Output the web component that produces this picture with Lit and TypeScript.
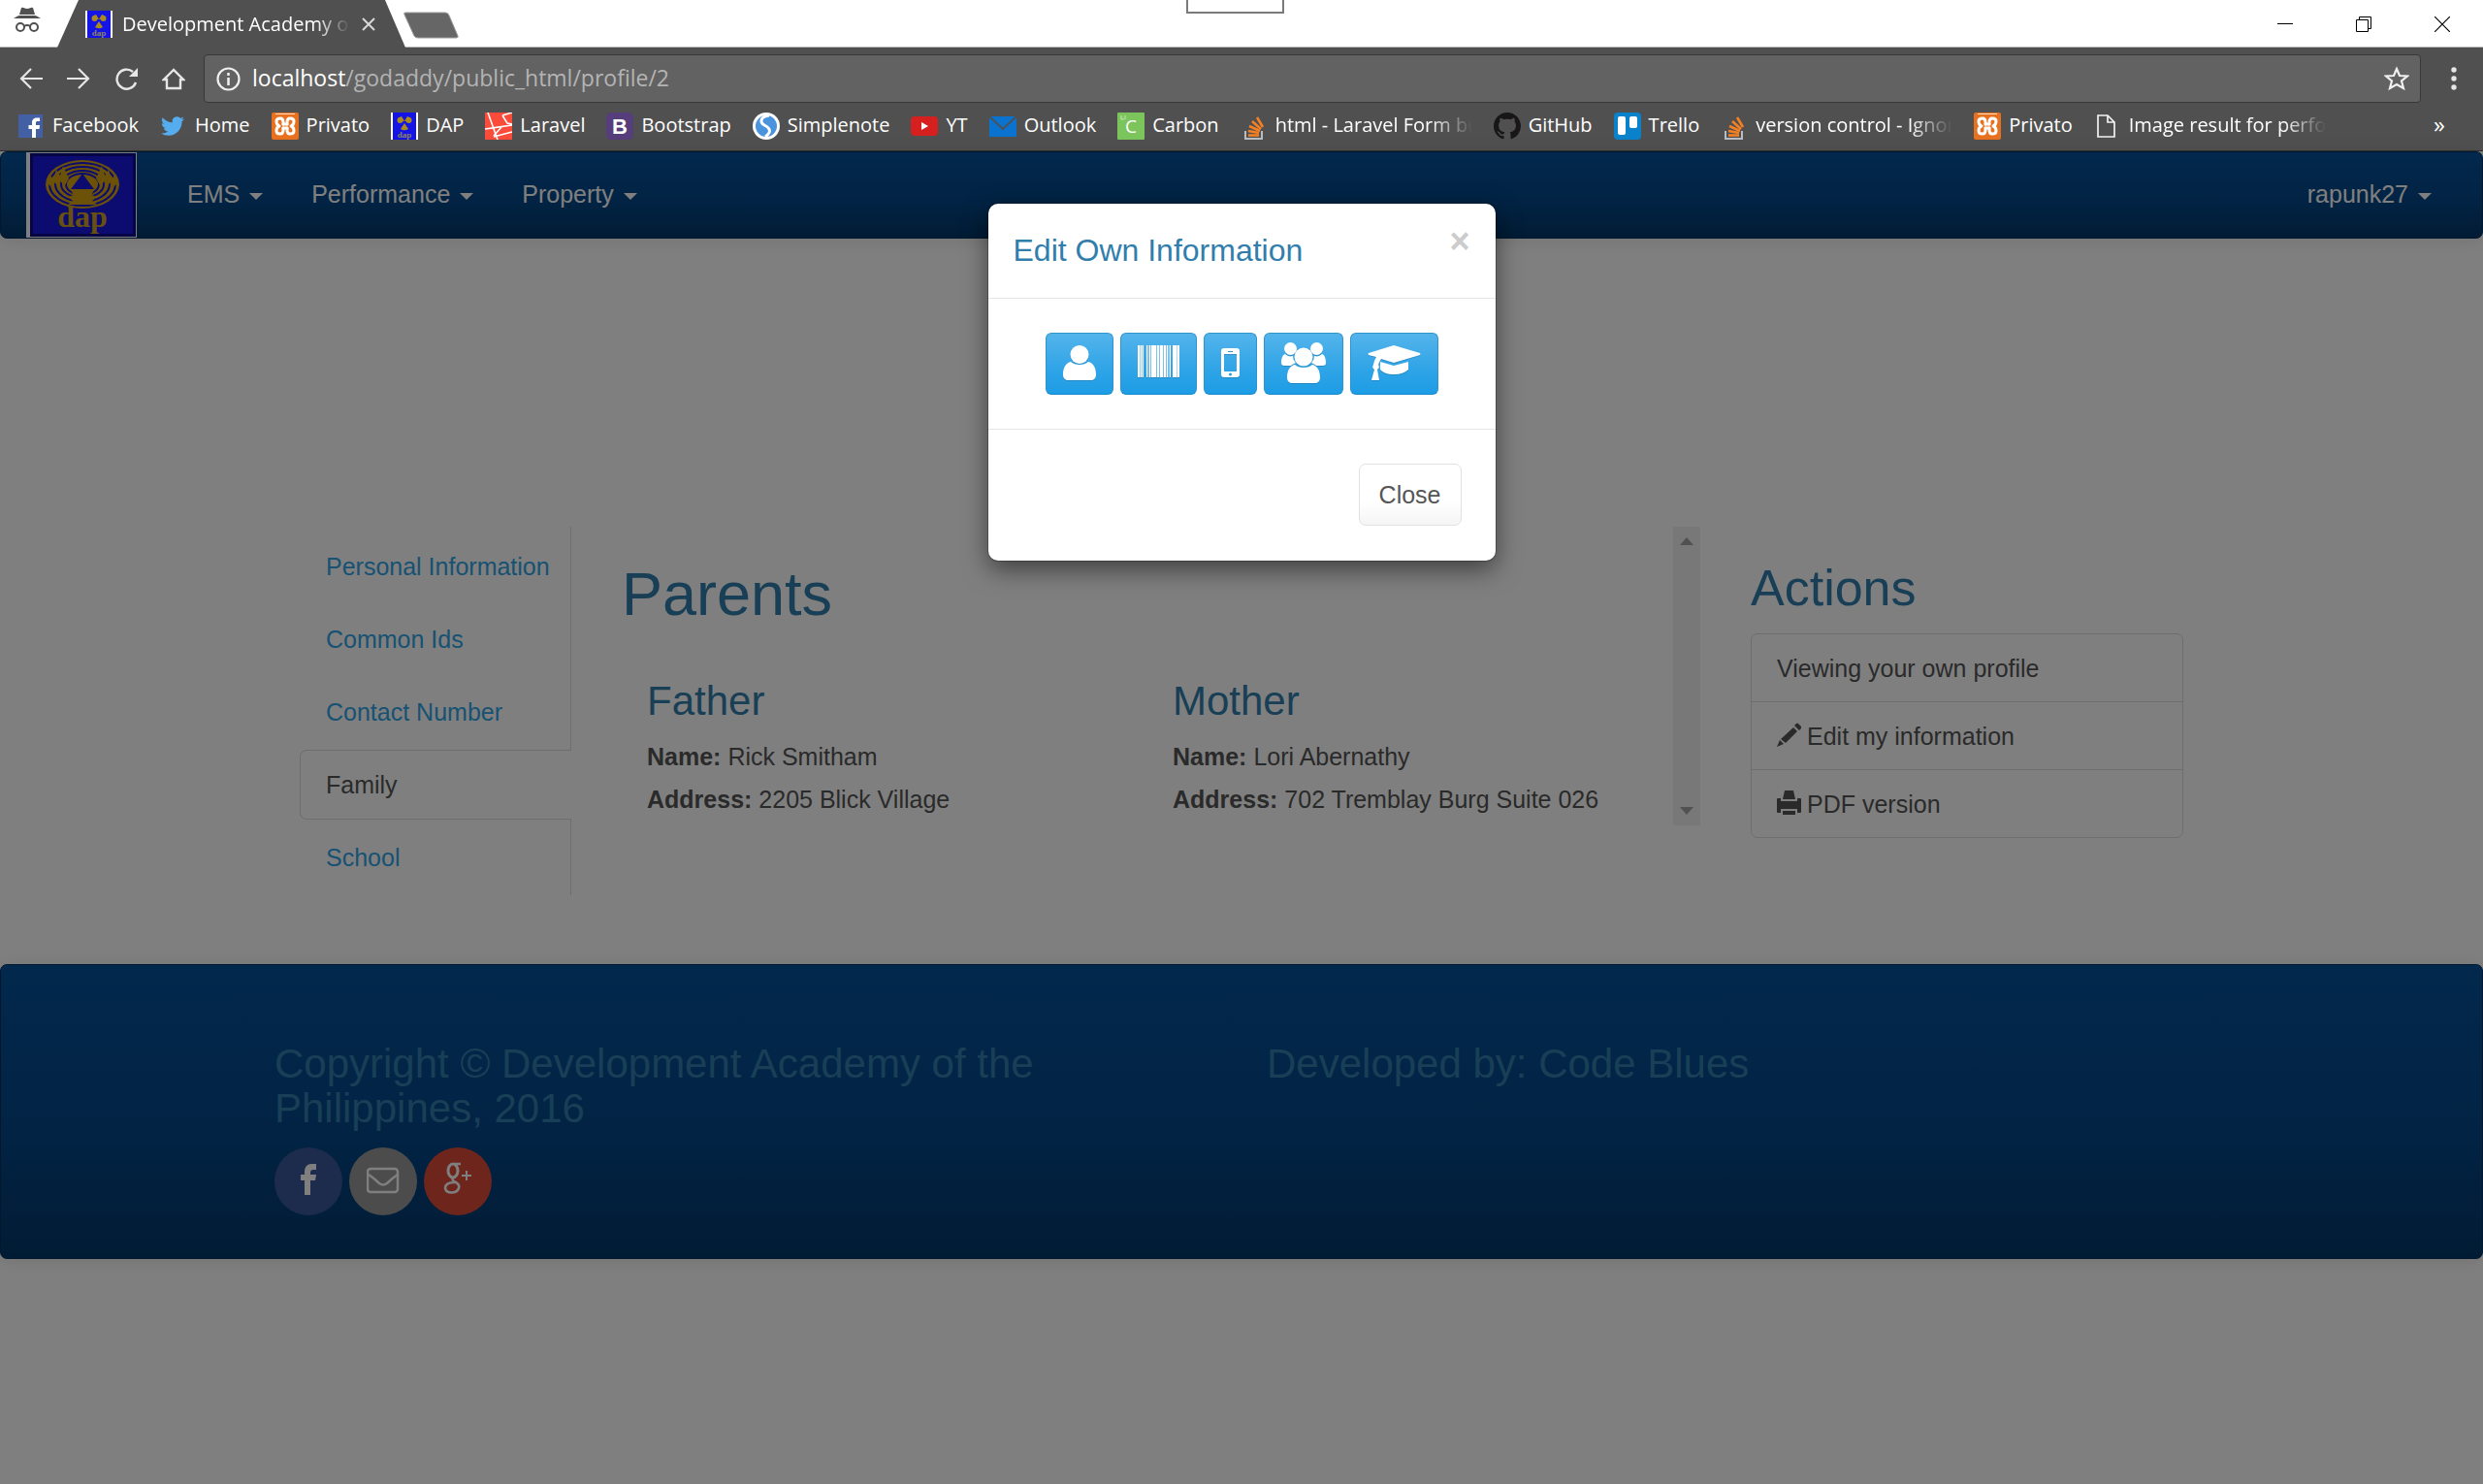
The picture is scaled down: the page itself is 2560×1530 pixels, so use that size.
import { LitElement, html, svg, css } from "lit";
import { customElement } from "lit/decorators.js";
import { classMap } from "lit/directives/class-map.js";

const glyph = (w: number, h: number, body: unknown, cls = "") =>
  html`<svg class=${cls} width=${w} height=${h} viewBox="0 0 ${w} ${h}" aria-hidden="true">${body}</svg>`;

const dapMark = svg`
  <rect width="28" height="28" fill="#fff"/><rect x="2" width="24" height="28" fill="#1414e6"/>
  <g fill="#a98a1c"><path d="M14 9 L11 4 A6 5 0 0 0 7 9 Z"/><path d="M14 9 L17 4 A6 5 0 0 1 21 9 Z"/>
  <circle cx="9.500" cy="8" r="3"/><circle cx="18.500" cy="8" r="3"/><path d="M14 11 L18 17 A7 6 0 0 1 10 17 Z"/></g>
  <text x="14" y="26" font-family="Liberation Serif, serif" font-size="9" font-weight="700" fill="#8d8460" text-anchor="middle">dap</text>`;

const xampp = svg`
  <rect width="28" height="28" rx="2" fill="#e8711f"/><rect x="4" y="1" width="20" height="1" fill="#ffd9bd"/>
  <g fill="none" stroke="#fff" stroke-width="3" stroke-linejoin="round" stroke-linecap="round">
  <path d="M12 12 V10 Q12 6 9 6 Q5 6 5 9 Q5 13 8 14 Q5 15 5 19 Q5 22 9 22 Q12 22 12 18 V16"/>
  <path d="M16 12 V10 Q16 6 19 6 Q23 6 23 9 Q23 13 20 14 Q23 15 23 19 Q23 22 19 22 Q16 22 16 18 V16"/>
  <path d="M12 12 H16 M12 16 H16"/></g>`;

const stack = svg`
  <path d="M5 19 v8 h17 v-8" fill="none" stroke="#b9bcc0" stroke-width="2"/>
  <g stroke="#f48024" stroke-width="2.600"><path d="M8 23.500 h11"/><path d="M8 19 l11 2"/><path d="M9 14 l11 5"/><path d="M12 9 l9 8"/><path d="M17 5 l6 10"/></g>`;

const marks: Record<string, unknown> = {
  facebook: svg`<rect x="1" y="2" width="25" height="24" fill="#4460a4"/>
    <path d="M15 26 V17 H11.500 V13 H15 V10.500 C15 7 17 5.500 20 5.500 H23 V9 H21 C19.500 9 19 9.500 19 11 V13 H23 L22.500 17 H19 V26Z" fill="#fff"/>`,
  twitter: svg`<path transform="translate(1 2)" fill="#55acee" d="M23.953 4.57a10 10 0 01-2.825.775 4.958 4.958 0 002.163-2.723c-.951.555-2.005.959-3.127 1.184a4.92 4.92 0 00-8.384 4.482C7.69 8.095 4.067 6.13 1.64 3.162a4.822 4.822 0 00-.666 2.475c0 1.71.87 3.213 2.188 4.096a4.904 4.904 0 01-2.228-.616v.06a4.923 4.923 0 003.946 4.827 4.996 4.996 0 01-2.212.085 4.936 4.936 0 004.604 3.417 9.867 9.867 0 01-6.102 2.105c-.39 0-.779-.023-1.17-.067a13.995 13.995 0 007.557 2.209c9.053 0 13.998-7.496 13.998-13.985 0-.21 0-.42-.015-.63A9.935 9.935 0 0024 4.59z"/>`,
  xampp,
  dap: dapMark,
  laravel: svg`<rect width="28" height="28" fill="#fb4b3a"/>
    <path d="M3 0 L13 28 M0 17 L28 13 M9 24 L18 14 M18 3 L28 0 M18 3 L23 11 L28 12 M9 25 L28 20" fill="none" stroke="#fff" stroke-width="1.600"/>`,
  bootstrap: svg`<rect width="28" height="28" rx="5" fill="#563d7c"/>
    <text x="14" y="22" font-family="Liberation Sans, sans-serif" font-size="22" font-weight="700" fill="#fff" text-anchor="middle">B</text>`,
  simplenote: svg`<circle cx="14" cy="14" r="14" fill="#fff"/><circle cx="14" cy="14" r="11" fill="#4a93dd"/>
    <path d="M17 3 C8 4 7 10 12 13 C18 16 20 20 13 25" fill="none" stroke="#fff" stroke-width="3"/>`,
  youtube: svg`<rect y="4" width="28" height="20" rx="4" fill="#d5201f"/><path d="M11 10 L18 14 L11 18Z" fill="#fff"/>`,
  outlook: svg`<path d="M0 4 H28 V25 H0Z" fill="#0a72cf"/><path d="M0 4 L14 17 L28 4" fill="none" stroke="#505050" stroke-width="2"/>`,
  carbon: svg`<rect width="28" height="28" rx="1" fill="#7cc45c"/><path d="M4 3 v4 h3 M8 3 v4" stroke="#c9e8b8" stroke-width="1" fill="none"/>
    <text x="14" y="21" font-family="Open Sans, sans-serif" font-size="19" fill="#fff" text-anchor="middle">C</text>`,
  stack,
  github: svg`<path transform="scale(1.750)" fill="#181616" d="M8 0C3.58 0 0 3.58 0 8c0 3.54 2.29 6.53 5.47 7.59.4.07.55-.17.55-.38 0-.19-.01-.82-.01-1.49-2.01.37-2.53-.49-2.69-.94-.09-.23-.48-.94-.82-1.13-.28-.15-.68-.52-.01-.53.63-.01 1.08.58 1.23.82.72 1.21 1.87.87 2.33.66.07-.52.28-.87.51-1.07-1.78-.2-3.64-.89-3.64-3.95 0-.87.31-1.59.82-2.15-.08-.2-.36-1.02.08-2.12 0 0 .67-.21 2.2.82.64-.18 1.32-.27 2-.27s1.36.09 2 .27c1.53-1.04 2.2-.82 2.2-.82.44 1.1.16 1.92.08 2.12.51.56.82 1.27.82 2.15 0 3.07-1.87 3.75-3.65 3.95.29.25.54.73.54 1.48 0 1.07-.01 1.93-.01 2.2 0 .21.15.46.55.38A8.01 8.01 0 0 0 16 8c0-4.42-3.58-8-8-8z"/>`,
  trello: svg`<rect width="28" height="28" rx="4" fill="#0a82cb"/><rect x="4" y="4" width="8" height="19" rx="2" fill="#fff"/><rect x="16" y="4" width="8" height="12" rx="2" fill="#fff"/>`,
  page: svg`<path d="M4 3 H14 L21 10 V25 H4Z M14 3 V10 H21" fill="none" stroke="#f2f2f2" stroke-width="1.700"/>`,
};

const bookmarks = [
  { icon: "facebook", label: "Facebook" },
  { icon: "twitter", label: "Home" },
  { icon: "xampp", label: "Privato" },
  { icon: "dap", label: "DAP" },
  { icon: "laravel", label: "Laravel" },
  { icon: "bootstrap", label: "Bootstrap" },
  { icon: "simplenote", label: "Simplenote" },
  { icon: "youtube", label: "YT" },
  { icon: "outlook", label: "Outlook" },
  { icon: "carbon", label: "Carbon" },
  { icon: "stack", label: "html - Laravel Form bu", long: true },
  { icon: "github", label: "GitHub" },
  { icon: "trello", label: "Trello" },
  { icon: "stack", label: "version control - Ignor", long: true },
  { icon: "xampp", label: "Privato" },
  { icon: "page", label: "Image result for perfo", long: true },
];

@customElement("browser-chrome")
class BrowserChrome extends LitElement {
  static styles = css`
    :host { display: block; background: #505050; color: #fff; font-family: "Open Sans", "Noto Sans", sans-serif; border-bottom: 1px solid #303030; }
    svg { display: block; flex: none; }
    button { border: 0; padding: 0; background: none; color: inherit; font: inherit; }
    a { color: inherit; text-decoration: none; }
    .strip { position: relative; display: flex; align-items: flex-end; height: 49px; background: linear-gradient(#fff 48px, #b9b9b9 48px); }
    .incognito { padding: 0 17px 14px 14px; }
    .tab { display: flex; align-items: center; box-sizing: border-box; width: 359px; height: 49px; padding: 0 31px 0 29px; background: #505050; clip-path: polygon(0 100%, 22px 0, calc(100% - 21px) 0, 100% 100%); }
    .tab-title { flex: 1; margin: 0 12px 0 10px; font-size: 20px; line-height: 28px; white-space: nowrap; overflow: hidden; mask-image: linear-gradient(90deg, #000 85%, transparent); }
    .new-tab { margin-bottom: 9px; margin-left: -3px; }
    .snap { position: absolute; top: -2px; left: calc(50% - 57px); width: 97px; height: 12px; border: 2px solid #7a7a7a; background: #fff; }
    .controls { display: flex; margin: 0 2px 0 auto; align-self: stretch; }
    .control { display: grid; place-items: center; width: 81px; }
    .toolbar { display: flex; align-items: center; padding: 7px 22px 0 7px; }
    .nav-button { display: grid; place-items: center; width: 49px; height: 49px; }
    .omnibox { flex: 1; display: flex; align-items: center; box-sizing: border-box; height: 50px; margin-left: 7px; padding: 0 11px 0 12px; border: 1px solid #383838; border-radius: 4px; background: #626262; }
    .url { flex: 1; margin-left: 12px; padding-bottom: 2px; font-size: 23px; line-height: 32px; color: #b4b4b4; }
    .host { color: #fff; }
    .menu { margin-left: 26px; }
    .bookmarks { display: flex; align-items: center; gap: 22px; height: 47px; padding: 0 39px 2px 18px; }
    .bookmark { display: flex; align-items: center; gap: 8px; font-size: 20px; line-height: 28px; white-space: nowrap; }
    .bookmark span { padding-bottom: 2px; }
    .long { width: 203px; overflow: hidden; mask-image: linear-gradient(90deg, #000 78%, transparent); }
    .more { margin-left: auto; padding-bottom: 4px; font-size: 24px; line-height: 28px; }
  `;

  render() {
    return html`
      <div class="strip">
        ${glyph(28, 28, svg`<path d="M8 1 C10 0 12 2 14 2 C16 2 18 0 20 1 L22 8 H6Z" fill="#505050"/><path d="M0 12 C3 10 5 9 6 9 H22 C23 9 25 10 28 12Z" fill="#505050"/>
          <g fill="none" stroke="#505050" stroke-width="2"><circle cx="7" cy="21" r="4"/><circle cx="21" cy="21" r="4"/><path d="M11 20 q3 -2 6 0"/></g>`, "incognito")}
        <div class="tab">
          ${glyph(28, 28, dapMark)}
          <span class="tab-title">Development Academy of</span>
          <button aria-label="Close tab">${glyph(14, 14, svg`<path d="M1 1 L13 13 M13 1 L1 13" stroke="#d8d8d8" stroke-width="2"/>`)}</button>
        </div>
        <button class="new-tab" aria-label="New tab">${glyph(60, 28, svg`<path d="M3 1 H44 Q47 1 48 4 L57 25 Q58 27 55 27 H16 Q13 27 12 25 L2 3 Q1 1 3 1Z" fill="#666" stroke="#999" stroke-width="1"/>`)}</button>
        <div class="snap"></div>
        <div class="controls">
          <button class="control" aria-label="Minimize">${glyph(16, 16, svg`<path d="M0 7.500 H16" stroke="#000" stroke-width="1"/>`)}</button>
          <button class="control" aria-label="Restore">${glyph(16, 16, svg`<path d="M0.500 3.500 H12.500 V15.500 H0.500Z M3.500 3.500 V0.500 H15.500 V12.500 H12.500" fill="none" stroke="#000" stroke-width="1"/>`)}</button>
          <button class="control" aria-label="Close window">${glyph(16, 16, svg`<path d="M0 0 L16 16 M16 0 L0 16" stroke="#000" stroke-width="1.200"/>`)}</button>
        </div>
      </div>
      <div class="toolbar">
        <button class="nav-button" aria-label="Back">${glyph(24, 24, svg`<path d="M24 12 H2 M12 2 L2 12 L12 22" fill="none" stroke="#e6e6e6" stroke-width="2.200"/>`)}</button>
        <button class="nav-button" aria-label="Forward">${glyph(24, 24, svg`<path d="M0 12 H22 M12 2 L22 12 L12 22" fill="none" stroke="#e6e6e6" stroke-width="2.200"/>`)}</button>
        <button class="nav-button" aria-label="Reload">${glyph(24, 24, svg`<path d="M22 16 A10 10 0 1 1 19 5" fill="none" stroke="#e6e6e6" stroke-width="2.400"/><path d="M24 1 V10 H15Z" fill="#e6e6e6"/>`)}</button>
        <button class="nav-button" aria-label="Home page">${glyph(24, 24, svg`<path d="M12 3 L2 13 H5 V22 H19 V13 H22Z" fill="none" stroke="#e6e6e6" stroke-width="2.400"/>`)}</button>
        <div class="omnibox">
          ${glyph(25, 25, svg`<circle cx="12.500" cy="12.500" r="11" fill="none" stroke="#f0f0f0" stroke-width="2.200"/><path d="M12.500 11 V19 M12.500 6 V9" stroke="#f0f0f0" stroke-width="2.500"/>`)}
          <span class="url"><span class="host">localhost</span>/godaddy/public_html/profile/2</span>
          <button aria-label="Bookmark this page">${glyph(26, 26, svg`<path d="M13 3 L16 10 L24 10.500 L18 15.500 L20 23 L13 19 L6 23 L8 15.500 L2 10.500 L10 10Z" fill="none" stroke="#f0f0f0" stroke-width="2.200"/>`)}</button>
        </div>
        <button class="menu" aria-label="Menu">${glyph(16, 26, svg`<g fill="#e6e6e6"><circle cx="8" cy="4" r="2.700"/><circle cx="8" cy="13" r="2.700"/><circle cx="8" cy="22" r="2.700"/></g>`)}</button>
      </div>
      <nav class="bookmarks" aria-label="Bookmarks">
        ${bookmarks.map(b => html`<a class="bookmark" href="#">${glyph(28, 28, marks[b.icon])}<span class=${classMap({ long: !!b.long })}>${b.label}</span></a>`)}
        <button class="more" aria-label="More bookmarks">»</button>
      </nav>`;
  }
}

const torso = "M8 17 C3 18 0 23 0 30 C0 34 2 36 6 36 H28 C32 36 34 34 34 30 C34 23 31 18 26 17 C24 19 21 20 17 20 C13 20 10 19 8 17Z";
const bars = [[0, 2], [3, 1], [5, 1], [9, 1], [12, 1], [14, 5], [20, 2], [23, 3], [27, 2], [30, 1], [33, 1], [36, 4], [41, 2]];

const editIcons = [
  { label: "Personal information", icon: glyph(34, 44, svg`<g transform="translate(0 3)" fill="#fff"><circle cx="17" cy="9.500" r="9.500"/><path d=${torso}/></g>`) },
  { label: "Common ids", icon: glyph(43, 44, svg`<g transform="translate(0 3)" fill="#fff">${bars.map(([x, w]) => svg`<rect x=${x} width=${w} height="33"/>`)}<rect width="6" height="33" opacity="0.500"/><rect x="9" width="25" height="33" opacity="0.350"/><rect x="36" width="7" height="33" opacity="0.600"/></g>`) },
  { label: "Contact number", icon: glyph(19, 44, svg`<path transform="translate(0 6)" fill="#fff" fill-rule="evenodd" d="M3 0 H16 Q19 0 19 3 V27 Q19 30 16 30 H3 Q0 30 0 27 V3 Q0 0 3 0Z M3 6 V24 H16 V6Z M7 3 V4 H12 V3Z M9.500 25.500 A1.500 1.500 0 1 0 9.500 28.500 A1.500 1.500 0 1 0 9.500 25.500Z"/>`) },
  { label: "Family", icon: glyph(46, 44, svg`<g fill="#fff"><circle cx="9.500" cy="6.500" r="6.500"/><circle cx="36.500" cy="6.500" r="6.500"/><path d="M4 12 C1 13 0 17 0 21 C0 23 1 24 3 24 H10 C12 22 14 22 15 21 C13 19 12 17 12 14 C9 15 6 14 4 12Z M42 12 C45 13 46 17 46 21 C46 23 45 24 43 24 H36 C34 22 32 22 31 21 C33 19 34 17 34 14 C37 15 40 14 42 12Z"/><circle cx="23" cy="15" r="9.500"/>
    <path transform="translate(6 6)" d=${torso}/></g>`) },
  { label: "School", icon: glyph(55, 44, svg`<g transform="translate(0 3)" fill="#fff"><path d="M27 0 L54 8 Q55 9 54 10 L27 18 L14 14 Q12 17 11 20 Q13 23 10 25 L12 36 H4 L7 25 Q4 23 6 20 Q7 15 9 12 L1 10 Q0 9 1 8Z"/><path d="M13 17 L27 21 L42 17 V25 Q37 30 27 30 Q17 30 13 25Z"/></g>`) },
];

@customElement("edit-dialog")
class EditDialog extends LitElement {
  static styles = css`
    :host { display: block; width: 523px; max-width: 100%; border-radius: 10px; background: #fff; box-shadow: 0 0 0 1px rgba(0, 0, 0, 0.2), 0 9px 26px rgba(0, 0, 0, 0.5); }
    header { display: flex; justify-content: space-between; align-items: flex-start; padding: 26px; }
    h4 { margin: 0; font-size: 32px; font-weight: 400; line-height: 45px; color: #317eac; }
    button { font: inherit; }
    .dismiss { border: 0; padding: 0; background: none; font-size: 36px; font-weight: 700; line-height: 26px; color: #ccc; }
    .choices { display: flex; justify-content: center; gap: 7px; padding: 35px 0; border: solid #e5e5e5; border-width: 1px 0; }
    .choice { box-sizing: border-box; height: 64px; padding: 0 17px; border: 1px solid #2f93cc; border-bottom-color: #178acc; border-radius: 6px; background: linear-gradient(#54b4eb, #2fa4e7 60%, #1d9ce5); }
    .choice svg { display: block; filter: drop-shadow(0 1px 0 rgba(0, 0, 0, 0.15)); }
    footer { display: flex; justify-content: flex-end; padding: 35px 35px 36px; }
    .close { height: 64px; padding: 0 20px; border: 1px solid #e2e2e2; border-radius: 7px; background: linear-gradient(#fff, #fff 60%, #f5f5f5); font-size: 25px; line-height: 35px; color: #555; }
  `;

  render() {
    return html`
      <header><h4>Edit Own Information</h4><button class="dismiss" aria-label="Dismiss">×</button></header>
      <div class="choices">${editIcons.map(e => html`<button class="choice" aria-label=${e.label}>${e.icon}</button>`)}</div>
      <footer><button class="close">Close</button></footer>`;
  }
}

const logo = svg`
  <rect width="114" height="88" fill="#fff"/><rect x="4" y="1" width="109" height="86" fill="#0a0a8c"/><rect x="7" y="4" width="103" height="80" fill="#1616e0"/>
  <ellipse cx="58" cy="33" rx="38" ry="25" fill="#d8a510"/>
  <g fill="none" stroke="#1616e0" stroke-width="2"><ellipse cx="58" cy="33" rx="34" ry="22"/><ellipse cx="58" cy="33" rx="28" ry="18"/><ellipse cx="58" cy="33" rx="22" ry="14"/><ellipse cx="58" cy="33" rx="17" ry="11"/></g>
  <path d="M21 31 L25 24 L28 28 L31 18 L35 24 L38 14 L44 27 L40 34 L35 30 L32 34 L28 30 L25 35Z M95 31 L91 24 L88 28 L85 18 L81 24 L78 14 L72 27 L76 34 L81 30 L84 34 L88 30 L91 35Z M46 39 H70 L67 44 L73 46 L68 50 L73 54 H43 L48 50 L43 46 L49 44Z" fill="#d8a510"/>
  <path d="M58 22 L70 38 H46Z" fill="#1616e0"/>
  <text x="58" y="77" font-family="Liberation Serif, serif" font-size="32" font-weight="700" fill="#d0a020" text-anchor="middle">dap</text>`;

const sections = ["Personal Information", "Common Ids", "Contact Number", "Family", "School"];
const parents = [
  { role: "Father", name: "Rick Smitham", address: "2205 Blick Village" },
  { role: "Mother", name: "Lori Abernathy", address: "702 Tremblay Burg Suite 026" },
];
const pencil = glyph(25, 25, svg`<path fill="#555" d="M20 1 Q21 0 22 1 L25 4 Q25 5 25 6 L23 8 L18 3Z M17 5 L21 9 L9 21 L4 17Z M3 18 L7 22 L0 25Z"/>`);
const printer = glyph(25, 25, svg`<path fill="#555" d="M8 0 H17 L19 9 H6Z M0 9 Q0 8 1 8 H4 V11 H21 V8 H24 Q25 8 25 9 V22 Q25 23 24 23 H21 V19 H4 V23 H1 Q0 23 0 22Z M6 21 H19 V25 H6Z"/>`);

@customElement("profile-page")
class ProfilePage extends LitElement {
  static styles = css`
    :host { display: block; font-family: "Liberation Sans", Arial, sans-serif; font-size: 25px; line-height: 35px; color: #555; background: #fff; }
    svg { display: block; flex: none; }
    a { color: inherit; text-decoration: none; }
    h1, h2, h3, p, ul { margin: 0; padding: 0; list-style: none; }
    h1, h2, h3 { font-weight: 400; color: #317eac; }
    h1 { font-size: 63px; line-height: 69px; margin-bottom: 17px; }
    h2 { font-size: 52px; line-height: 57px; margin-bottom: 18px; }
    h3 { font-size: 42px; line-height: 46px; margin-bottom: 17px; }
    .navbar, .footer { box-sizing: border-box; border: 1px solid #022f5a; border-radius: 7px; background: linear-gradient(#04519b, #044687 60%, #033769); box-shadow: 0 2px 18px rgba(0, 0, 0, 0.1); }
    .navbar { display: flex; align-items: center; height: 90px; padding: 0 26px; color: #fff; }
    .menu { display: flex; gap: 50px; margin-left: 52px; }
    .account { margin: 0 26px 0 auto; }
    .drop { display: flex; align-items: center; gap: 10px; padding-bottom: 2px; }
    .drop::after { content: ""; margin-top: 4px; border: 7px solid transparent; border-bottom: 0; border-top-color: #fff; }
    .container { box-sizing: border-box; max-width: 2046px; margin: 0 auto; }
    .profile { display: grid; grid-template-columns: 280px minmax(0, 1fr) 446px; gap: 52px; align-items: start; padding: 297px 52px 71px; }
    .tabs { display: grid; gap: 3px; padding: 5px 0 3px; box-shadow: inset -1px 0 #ddd; }
    .tab { display: flex; align-items: center; box-sizing: border-box; height: 72px; padding-left: 26px; border: 1px solid transparent; border-right: 0; color: #2fa4e7; white-space: nowrap; }
    .active { border-color: #ddd; border-radius: 7px 0 0 7px; background: #fff; color: #555; }
    .panel { display: flex; height: 308px; }
    .panel-body { flex: 1; padding-top: 35px; }
    .parents { display: grid; grid-template-columns: 1fr 1fr; padding-top: 36px; }
    .parent { padding: 0 26px; }
    .parent p { margin-bottom: 9px; white-space: nowrap; }
    .scrollbar { display: flex; flex-direction: column; justify-content: space-between; width: 28px; background: #f1f1f1; }
    .scroll-button { display: grid; place-items: center; width: 28px; height: 30px; padding: 0; border: 0; background: none; }
    .actions { padding-top: 35px; }
    .actions ul { border: 1px solid #ddd; border-radius: 7px; }
    .actions li + li { border-top: 1px solid #ddd; }
    .action { display: flex; align-items: center; gap: 6px; padding: 18px 26px 16px; }
    .action svg { margin-bottom: 4px; }
    .footer-grid { display: grid; grid-template-columns: 1fr 1fr; padding: 79px 0 44px; }
    .footer-grid > div { padding: 0 26px; }
    .social { display: flex; gap: 7px; }
    .round { display: grid; place-items: center; width: 70px; height: 70px; border-radius: 50%; color: #fff; }
    .facebook { background: #3b5998; }
    .mail { background: #999; }
    .google { background: #dd4b39; }
  `;

  render() {
    return html`
      <nav class="navbar">
        <a href="#" aria-label="DAP">${glyph(114, 88, logo)}</a>
        <div class="menu">${["EMS", "Performance", "Property"].map(m => html`<a class="drop" href="#">${m}</a>`)}</div>
        <a class="drop account" href="#">rapunk27</a>
      </nav>
      <main class="container profile">
        <nav class="tabs">${sections.map(s => html`<a href="#" class=${classMap({ tab: true, active: s === "Family" })}>${s}</a>`)}</nav>
        <section class="panel">
          <div class="panel-body">
            <h1>Parents</h1>
            <div class="parents">${parents.map(p => html`
              <div class="parent"><h3>${p.role}</h3><p><b>Name:</b> ${p.name}</p><p><b>Address:</b> ${p.address}</p></div>`)}</div>
          </div>
          <div class="scrollbar">
            <button class="scroll-button" aria-label="Scroll up">${glyph(14, 8, svg`<path d="M0 8 L7 0 L14 8Z" fill="#a3a3a3"/>`)}</button>
            <button class="scroll-button" aria-label="Scroll down">${glyph(14, 8, svg`<path d="M0 0 L7 8 L14 0Z" fill="#a3a3a3"/>`)}</button>
          </div>
        </section>
        <aside class="actions">
          <h2>Actions</h2>
          <ul>
            <li class="action">Viewing your own profile</li>
            <li><a class="action" href="#">${pencil}Edit my information</a></li>
            <li><a class="action" href="#">${printer}PDF version</a></li>
          </ul>
        </aside>
      </main>
      <footer class="footer">
        <div class="container footer-grid">
          <div>
            <h3>Copyright © Development Academy of the Philippines, 2016</h3>
            <div class="social">
              <a class="round facebook" href="#" aria-label="Facebook">${glyph(34, 38, svg`<path fill="#fff" d="M13 33 V18 H9 V12 H13 V9 C13 4 16 1 20 1 H25 V7 H22 C20 7 19 8 19 10 V12 H25 L24 18 H19 V33Z"/>`)}</a>
              <a class="round mail" href="#" aria-label="Mail">${glyph(34, 30, svg`<rect x="1" y="2" width="31" height="24" rx="3" fill="none" stroke="#fff" stroke-width="2.500"/><path d="M2 8 Q8 12 13 17 Q17 20 21 17 Q26 12 32 8" fill="none" stroke="#fff" stroke-width="2.500"/>`)}</a>
              <a class="round google" href="#" aria-label="Google Plus">${glyph(34, 40, svg`<g fill="none" stroke="#fff"><ellipse cx="12" cy="9" rx="5" ry="7" stroke-width="3"/><path d="M13 2 H20 M13 16 Q10 18 13 20 C18 22 19 24 18 27 C16 33 5 33 4 27 C4 22 9 21 14 21" stroke-width="2.500"/><path d="M21 14 H31 M26 9 V19" stroke-width="2"/></g>`)}</a>
            </div>
          </div>
          <div><h3>Developed by: Code Blues</h3></div>
        </div>
      </footer>`;
  }
}

@customElement("app-root")
class AppRoot extends LitElement {
  static styles = css`
    :host { display: flex; flex-direction: column; min-height: 100vh; background: #fff; font-family: "Liberation Sans", Arial, sans-serif; }
    .viewport { position: relative; flex: 1; background: #fff; }
    .backdrop { position: absolute; inset: 0; display: flex; justify-content: center; align-items: flex-start; padding-top: 54px; background: rgba(0, 0, 0, 0.5); }
  `;

  render() {
    return html`
      <browser-chrome></browser-chrome>
      <div class="viewport">
        <profile-page></profile-page>
        <div class="backdrop"><edit-dialog role="dialog" aria-modal="true"></edit-dialog></div>
      </div>`;
  }
}
